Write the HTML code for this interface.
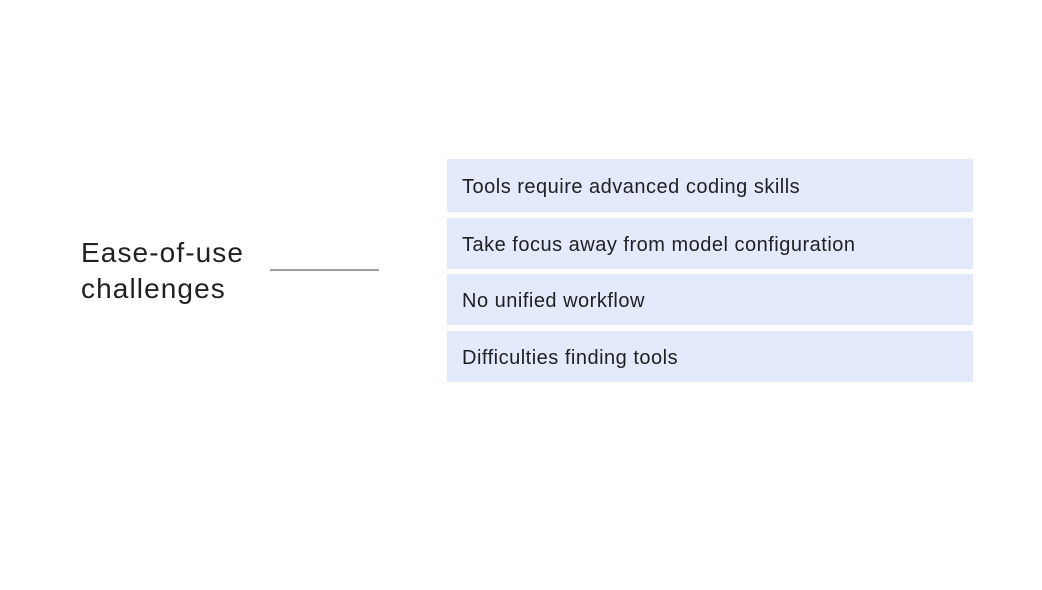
<!DOCTYPE html>
<html><head><style>
body{margin:0;width:1042px;height:590px;background:#fff;position:relative;overflow:hidden;font-family:"Liberation Sans",sans-serif;color:#202124}
.t{position:absolute;left:81px;top:235px;font-size:28px;line-height:36px;letter-spacing:1.1px}
.l{position:absolute;left:270px;top:269px;width:109px;height:2px;background:#9e9e9e}
.b{position:absolute;left:447px;width:526px;background:#e2eafb;font-size:20px;letter-spacing:0.5px;box-sizing:border-box;padding-left:15px;padding-top:3px;display:flex;align-items:center}
</style></head><body>
<div class="t">Ease-of-use<br>challenges</div>
<div class="l"></div>
<div class="b" style="top:159px;height:53px">Tools require advanced coding skills</div>
<div class="b" style="top:218px;height:51px">Take focus away from model configuration</div>
<div class="b" style="top:274px;height:51px">No unified workflow</div>
<div class="b" style="top:331px;height:51px">Difficulties finding tools</div>
</body></html>
